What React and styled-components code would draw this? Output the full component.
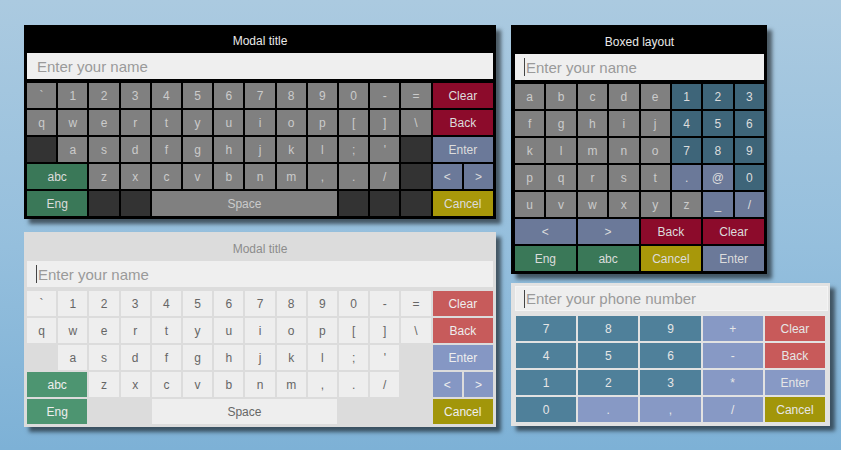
import React from 'react';
import styled, { createGlobalStyle } from 'styled-components';

const GlobalStyle = createGlobalStyle`
  html, body { margin: 0; padding: 0; }
  body {
    width: 841px;
    height: 450px;
    overflow: hidden;
    background: linear-gradient(to bottom, #abcae0 0%, #95bfdd 55%, #7db1d6 100%);
    font-family: "Liberation Sans", Arial, sans-serif;
    -webkit-font-smoothing: antialiased;
  }
`;

const palettes = {
  dark: {
    panel: '#000000', title: '#e8e8e8', field: '#efefef',
    key: '#808080', keyText: '#cbcbcb', blank: '#333333',
    red: '#8c0b2b', blue: '#6b7999', green: '#3a7858', yellow: '#a8980a', teal: '#3e6579',
    lit: '#dcdcdc',
  },
  light: {
    panel: '#dcdcdc', title: '#8c8c8c', field: '#efefef',
    key: '#eeeeee', keyText: '#666666', blank: '#dcdcdc',
    red: '#c75b5b', blue: '#8597c4', green: '#4d9571', yellow: '#a2960a', teal: '#4f819b',
    lit: '#eeeeee',
  },
  phone: {
    panel: '#e2e2e2', title: '#8c8c8c', field: '#eeeeee',
    key: '#eeeeee', keyText: '#666666', blank: '#dcdcdc',
    red: '#c85a5a', blue: '#8799c5', green: '#4d9571', yellow: '#a2960a', teal: '#4f809a',
    lit: '#e6e6e6',
  },
};

const Page = styled.div`
  display: flex;
  align-items: flex-start;
  gap: 15px;
  padding: 25px 0 0 24px;
`;

const Column = styled.div`
  display: flex;
  flex-direction: column;
  gap: ${p => p.$gap}px;
`;

const Panel = styled.div`
  width: ${p => p.$width}px;
  box-sizing: border-box;
  background: ${p => palettes[p.$pal].panel};
  padding: ${p => p.$pad};
  box-shadow: 5px 5px 4px rgba(0, 0, 0, 0.55);
  display: flex;
  flex-direction: column;
`;

const Title = styled.div`
  height: ${p => p.$h}px;
  line-height: ${p => p.$h + 5}px;
  text-align: center;
  font-size: 12px;
  color: ${p => palettes[p.$pal].title};
`;

const Field = styled.div`
  height: ${p => p.$h}px;
  background: ${p => palettes[p.$pal].field};
  display: flex;
  align-items: center;
  padding-left: ${p => p.$indent}px;
  font-size: 15px;
  color: #9a9a9a;
  box-sizing: border-box;
  border: ${p => (p.$pal === 'phone' ? '1px solid #f4f4f4' : 'none')};
`;

const Caret = styled.span`
  display: inline-block;
  width: 1px;
  height: 18px;
  background: #444;
  margin-right: 1px;
`;

const Spacer = styled.div`
  height: ${p => p.$h}px;
`;

const KeyGrid = styled.div`
  display: grid;
  grid-template-columns: repeat(${p => p.$cols}, 1fr);
  grid-auto-rows: 25px;
  gap: 2px;
  margin: ${p => p.$margin};
`;

const Key = styled.div`
  grid-column: span ${p => p.$span || 1};
  background: ${p => palettes[p.$pal][p.$tone || 'key']};
  color: ${p => (p.$tone && p.$tone !== 'key' ? palettes[p.$pal].lit : palettes[p.$pal].keyText)};
  font-size: 12px;
  display: flex;
  align-items: center;
  justify-content: center;
  user-select: none;
`;

// shorthand: string = normal key, object = special key
const B = { tone: 'blank' };
const fullRows = [
  ['`', '1', '2', '3', '4', '5', '6', '7', '8', '9', '0', '-', '=', { label: 'Clear', span: 2, tone: 'red' }],
  ['q', 'w', 'e', 'r', 't', 'y', 'u', 'i', 'o', 'p', '[', ']', '\\', { label: 'Back', span: 2, tone: 'red' }],
  [B, 'a', 's', 'd', 'f', 'g', 'h', 'j', 'k', 'l', ';', "'", B, { label: 'Enter', span: 2, tone: 'blue' }],
  [{ label: 'abc', span: 2, tone: 'green' }, 'z', 'x', 'c', 'v', 'b', 'n', 'm', ',', '.', '/', B,
    { label: '<', tone: 'blue' }, { label: '>', tone: 'blue' }],
  [{ label: 'Eng', span: 2, tone: 'green' }, B, B, { label: 'Space', span: 6 }, B, B, B,
    { label: 'Cancel', span: 2, tone: 'yellow' }],
];

const T = l => ({ label: l, tone: 'teal' });
const U = l => ({ label: l, tone: 'blue' });
const boxedRows = [
  ['a', 'b', 'c', 'd', 'e', T('1'), T('2'), T('3')],
  ['f', 'g', 'h', 'i', 'j', T('4'), T('5'), T('6')],
  ['k', 'l', 'm', 'n', 'o', T('7'), T('8'), T('9')],
  ['p', 'q', 'r', 's', 't', U('.'), U('@'), T('0')],
  ['u', 'v', 'w', 'x', 'y', 'z', U('_'), U('/')],
  [{ label: '<', span: 2, tone: 'blue' }, { label: '>', span: 2, tone: 'blue' },
    { label: 'Back', span: 2, tone: 'red' }, { label: 'Clear', span: 2, tone: 'red' }],
  [{ label: 'Eng', span: 2, tone: 'green' }, { label: 'abc', span: 2, tone: 'green' },
    { label: 'Cancel', span: 2, tone: 'yellow' }, { label: 'Enter', span: 2, tone: 'blue' }],
];

const phoneRows = [
  [T('7'), T('8'), T('9'), U('+'), { label: 'Clear', tone: 'red' }],
  [T('4'), T('5'), T('6'), U('-'), { label: 'Back', tone: 'red' }],
  [T('1'), T('2'), T('3'), U('*'), { label: 'Enter', tone: 'blue' }],
  [T('0'), U('.'), U(','), U('/'), { label: 'Cancel', tone: 'yellow' }],
];

function Keys({ rows, cols, pal, margin = '0' }) {
  return (
    <KeyGrid $cols={cols} $margin={margin}>
      {rows.flat().map((k, i) => {
        const key = typeof k === 'string' ? { label: k } : k;
        return (
          <Key key={i} $pal={pal} $tone={key.tone} $span={key.span}>
            {key.label}
          </Key>
        );
      })}
    </KeyGrid>
  );
}

export default function App() {
  return (
    <>
      <GlobalStyle />
      <Page>
        <Column $gap={13}>
          <Panel $pal="dark" $width={472} $pad="0 3px 3px 3px">
            <Title $pal="dark" $h={28}>Modal title</Title>
            <Field $pal="dark" $h={26} $indent={10}>Enter your name</Field>
            <Spacer $h={4} />
            <Keys rows={fullRows} cols={15} pal="dark" />
          </Panel>
          <Panel $pal="light" $width={472} $pad="0 3px 3px 3px">
            <Title $pal="light" $h={29}>Modal title</Title>
            <Field $pal="light" $h={26} $indent={9}><Caret />Enter your name</Field>
            <Spacer $h={4} />
            <Keys rows={fullRows} cols={15} pal="light" />
          </Panel>
        </Column>
        <Column $gap={9}>
          <Panel $pal="dark" $width={256} $pad="0 3px 3px 4px">
            <Title $pal="dark" $h={29}>Boxed layout</Title>
            <Field $pal="dark" $h={26} $indent={9}><Caret />Enter your name</Field>
            <Spacer $h={4} />
            <Keys rows={boxedRows} cols={8} pal="dark" />
          </Panel>
          <Panel $pal="phone" $width={319} $pad="3px 2px 4px 4px">
            <Field $pal="phone" $h={25} $indent={8}><Caret />Enter your phone number</Field>
            <Spacer $h={5} />
            <Keys rows={phoneRows} cols={5} pal="phone" margin="0 3px 0 1px" />
          </Panel>
        </Column>
      </Page>
    </>
  );
}
